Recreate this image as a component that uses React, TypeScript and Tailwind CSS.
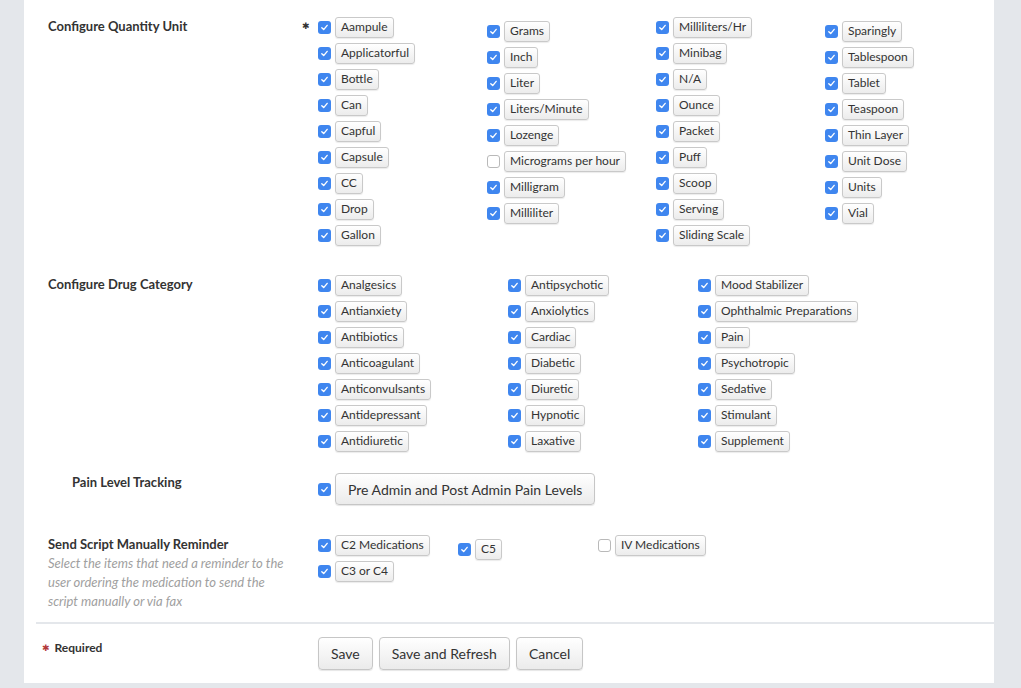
import React from 'react';

const quantityCols: { items: [string, boolean][]; offset: boolean }[] = [
  {
    offset: false,
    items: [
      ['Aampule', true], ['Applicatorful', true], ['Bottle', true], ['Can', true], ['Capful', true],
      ['Capsule', true], ['CC', true], ['Drop', true], ['Gallon', true],
    ],
  },
  {
    offset: true,
    items: [
      ['Grams', true], ['Inch', true], ['Liter', true], ['Liters/Minute', true], ['Lozenge', true],
      ['Micrograms per hour', false], ['Milligram', true], ['Milliliter', true],
    ],
  },
  {
    offset: false,
    items: [
      ['Milliliters/Hr', true], ['Minibag', true], ['N/A', true], ['Ounce', true], ['Packet', true],
      ['Puff', true], ['Scoop', true], ['Serving', true], ['Sliding Scale', true],
    ],
  },
  {
    offset: true,
    items: [
      ['Sparingly', true], ['Tablespoon', true], ['Tablet', true], ['Teaspoon', true], ['Thin Layer', true],
      ['Unit Dose', true], ['Units', true], ['Vial', true],
    ],
  },
];

const drugCols: string[][] = [
  ['Analgesics', 'Antianxiety', 'Antibiotics', 'Anticoagulant', 'Anticonvulsants', 'Antidepressant', 'Antidiuretic'],
  ['Antipsychotic', 'Anxiolytics', 'Cardiac', 'Diabetic', 'Diuretic', 'Hypnotic', 'Laxative'],
  ['Mood Stabilizer', 'Ophthalmic Preparations', 'Pain', 'Psychotropic', 'Sedative', 'Stimulant', 'Supplement'],
];

const Check = ({ checked }: { checked: boolean }) =>
  checked ? (
    <span className="w-[13px] h-[13px] shrink-0 rounded-[3px] bg-[#3f86ef] flex items-center justify-center">
      <svg width="9" height="9" viewBox="0 0 10 10">
        <path d="M2 5.2 L4.1 7.3 L8 2.6" fill="none" stroke="white" strokeWidth="1.5" strokeLinecap="round" strokeLinejoin="round" />
      </svg>
    </span>
  ) : (
    <span className="w-[13px] h-[13px] shrink-0 rounded-[3px] bg-white border border-[#b9b9b9]" />
  );

const Chip = ({ label }: { label: string }) => (
  <span className="h-[21px] px-[5px] flex items-center rounded-[3px] border border-[#c9c9c9] bg-gradient-to-b from-white to-[#ececec] shadow-[0_1px_1px_rgba(0,0,0,0.08)] text-[12px] text-[#333] whitespace-nowrap">
    {label}
  </span>
);

const Item = ({ label, checked }: { label: string; checked: boolean }) => (
  <div className="h-[26px] flex items-center gap-[4px]">
    <Check checked={checked} />
    <Chip label={label} />
  </div>
);

const Btn = ({ children }: { children: React.ReactNode }) => (
  <button className="h-[33px] px-[12px] rounded-[4px] border border-[#c6c6c6] bg-gradient-to-b from-white to-[#ebebeb] shadow-[0_1px_1px_rgba(0,0,0,0.1)] text-[14px] text-[#333]">
    {children}
  </button>
);

export default function App() {
  return (
    <div className="min-h-[688px] bg-[#e4e7eb] pl-[24px] pr-[27px] pb-[5px] font-['Lato',sans-serif] text-[#333]">
      <div className="bg-white pt-[14px]">
        {/* Configure Quantity Unit */}
        <div className="flex">
          <div className="w-[294px] pl-[24px] text-[13px] font-bold leading-[24px]">Configure Quantity Unit</div>
          <div className="flex">
            {quantityCols.map((col, ci) => (
              <div key={ci} className={`relative w-[169px] ${col.offset ? 'mt-[4px]' : ''}`}>
                {ci === 0 && (
                  <span className="absolute left-[-16px] top-[8px] text-[9px] leading-none font-['DejaVu_Sans',sans-serif] text-[#333]">✱</span>
                )}
                {col.items.map(([l, c]) => (
                  <Item key={l} label={l} checked={c} />
                ))}
              </div>
            ))}
          </div>
        </div>

        {/* Configure Drug Category */}
        <div className="flex mt-[24px]">
          <div className="w-[294px] pl-[24px] text-[13px] font-bold leading-[24px]">Configure Drug Category</div>
          <div className="flex">
            {drugCols.map((col, ci) => (
              <div key={ci} className="w-[190px]">
                {col.map((l) => (
                  <Item key={l} label={l} checked={true} />
                ))}
              </div>
            ))}
          </div>
        </div>

        {/* Pain Level Tracking */}
        <div className="flex mt-[19px]">
          <div className="w-[294px] pl-[48px] pt-[1px] text-[13px] font-bold leading-[16px]">Pain Level Tracking</div>
          <div className="flex items-center gap-[4px]">
            <Check checked={true} />
            <button className="h-[32px] px-[12px] rounded-[4px] border border-[#c6c6c6] bg-gradient-to-b from-white to-[#ebebeb] shadow-[0_1px_1px_rgba(0,0,0,0.1)] text-[14px] text-[#333]">
              Pre Admin and Post Admin Pain Levels
            </button>
          </div>
        </div>

        {/* Send Script Manually Reminder */}
        <div className="flex mt-[27px]">
          <div className="w-[294px] pl-[24px] pt-[2px]">
            <div className="text-[13px] font-bold leading-[20px]">Send Script Manually Reminder</div>
            <div className="w-[242px] text-[13px] italic text-[#a0a0a0] leading-[19px]">
              Select the items that need a reminder to the user ordering the medication to send the script manually or via fax
            </div>
          </div>
          <div className="flex">
            <div className="w-[140px]">
              <Item label="C2 Medications" checked={true} />
              <Item label="C3 or C4" checked={true} />
            </div>
            <div className="w-[140px] mt-[4px]">
              <Item label="C5" checked={true} />
            </div>
            <div className="w-[140px]">
              <Item label="IV Medications" checked={false} />
            </div>
          </div>
        </div>

        {/* Footer */}
        <div className="ml-[12px] mt-[11px] h-[2px] bg-[#e4e7eb]" />
        <div className="flex items-start pt-[13px] pb-[13px]">
          <div className="w-[294px] pl-[18px] pt-[3px] flex items-center gap-[5px] text-[12px] font-bold leading-[16px]">
            <span className="text-[#b33a3a] text-[9px] leading-none font-['DejaVu_Sans',sans-serif]">✱</span>
            <span>Required</span>
          </div>
          <div className="flex gap-[6px]">
            <Btn>Save</Btn>
            <Btn>Save and Refresh</Btn>
            <Btn>Cancel</Btn>
          </div>
        </div>
      </div>
    </div>
  );
}
